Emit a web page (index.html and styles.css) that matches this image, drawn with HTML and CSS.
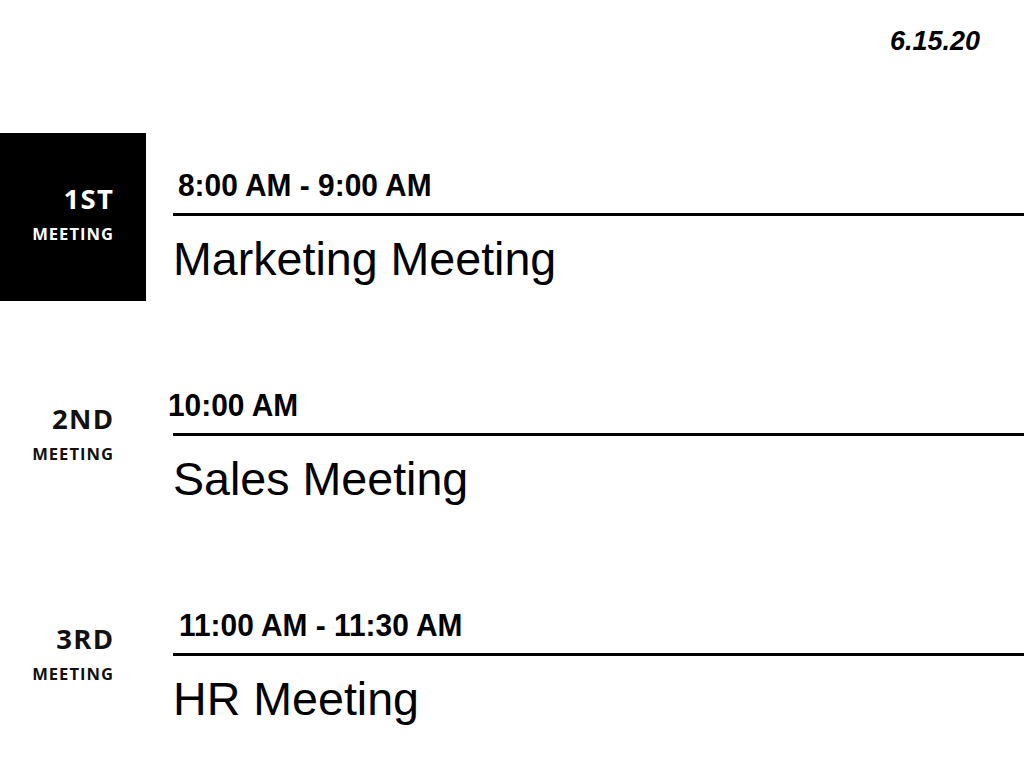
FILE: index.html
```html
<!DOCTYPE html>
<html lang="en">
<head>
<meta charset="utf-8">
<title>Meetings 6.15.20</title>
<link rel="stylesheet" href="styles.css">
</head>
<body>
<header class="header">
  <div class="date">6.15.20</div>
</header>
<main class="schedule">
  <section class="row row--active">
    <div class="label">
      <div class="ordinal">1ST</div>
      <div class="label-sub">MEETING</div>
    </div>
    <div class="details">
      <div class="time time--a">8:00 AM - 9:00 AM</div>
      <div class="rule"></div>
      <div class="title">Marketing Meeting</div>
    </div>
  </section>
  <section class="row">
    <div class="label">
      <div class="ordinal">2ND</div>
      <div class="label-sub">MEETING</div>
    </div>
    <div class="details">
      <div class="time time--b">10:00 AM</div>
      <div class="rule"></div>
      <div class="title">Sales Meeting</div>
    </div>
  </section>
  <section class="row">
    <div class="label">
      <div class="ordinal">3RD</div>
      <div class="label-sub">MEETING</div>
    </div>
    <div class="details">
      <div class="time time--c">11:00 AM - 11:30 AM</div>
      <div class="rule"></div>
      <div class="title">HR Meeting</div>
    </div>
  </section>
</main>
</body>
</html>
```
FILE: styles.css
```css
html, body {
  margin: 0;
  padding: 0;
  background: #fff;
  color: #000;
}
body {
  width: 1024px;
  height: 773px;
  overflow: hidden;
  font-family: "Liberation Sans", Arial, sans-serif;
}
.header {
  height: 133px;
  box-sizing: border-box;
  padding: 25px 44px 0 0;
  display: flex;
  justify-content: flex-end;
}
.date {
  font-size: 27px;
  line-height: 32px;
  font-weight: bold;
  font-style: italic;
}
.schedule {
  display: flex;
  flex-direction: column;
  gap: 52px;
}
.row {
  display: grid;
  grid-template-columns: 146px 1fr;
  height: 168px;
}
.label {
  box-sizing: border-box;
  padding: 50px 33px 0 0;
  display: flex;
  flex-direction: column;
  align-items: flex-end;
  font-family: "Open Sans", "Noto Sans", sans-serif;
  font-weight: 700;
  color: #111;
}
.row--active .label {
  background: #000;
  color: #fff;
}
.ordinal {
  font-size: 27.5px;
  line-height: 32px;
  letter-spacing: 1.3px;
  margin-right: -1.3px;
}
.label-sub {
  margin-top: 9px;
  font-size: 16.6px;
  line-height: 20px;
  letter-spacing: 1px;
  margin-right: -1px;
}
.details {
  padding: 34px 0 0 27px;
  display: flex;
  flex-direction: column;
}
.time {
  font-weight: bold;
  font-size: 32px;
  line-height: 36px;
  white-space: nowrap;
  transform: scaleX(0.934);
  transform-origin: left center;
}
.time--a { margin-left: 5px; }
.time--b { margin-left: -5px; }
.time--c { margin-left: 6px; }
.rule {
  margin-top: 10px;
  height: 3px;
  background: #000;
}
.title {
  margin-top: 17px;
  font-size: 46.6px;
  line-height: 52px;
  white-space: nowrap;
}
```
